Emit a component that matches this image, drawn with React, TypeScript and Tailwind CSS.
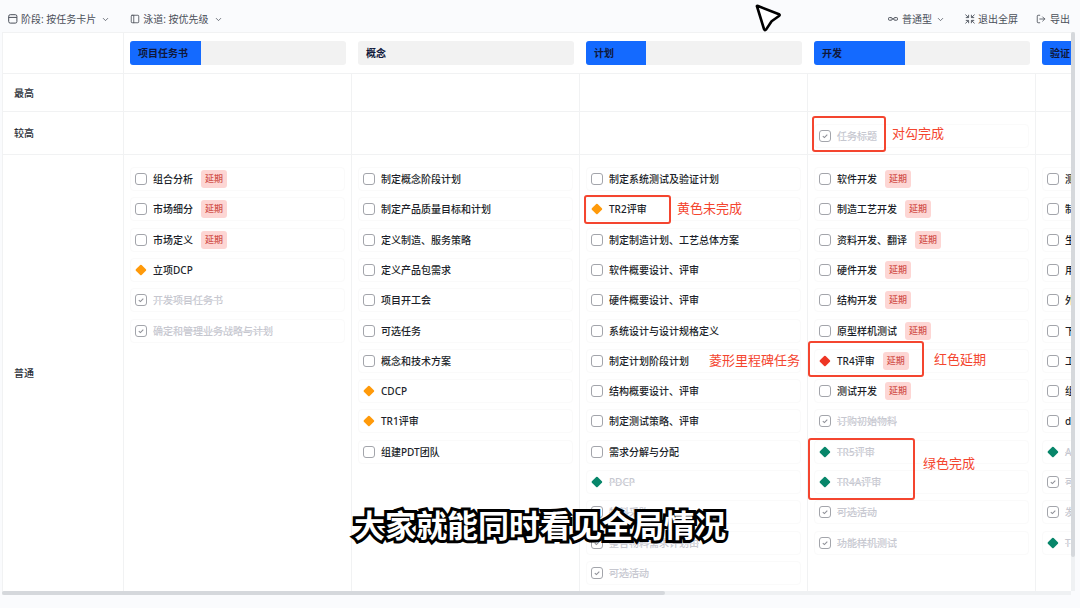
import { ChevronDown, LogOut, PanelLeft } from "lucide-react";

type Kind = "open" | "done" | "yellow" | "red" | "green";

interface Task {
  title: string;
  kind: Kind;
  late?: boolean;
}

interface Stage {
  name: string;
  progress: number;
  high?: Task[];
  normal: Task[];
}

const task = (title: string, kind: Kind = "open", late = false): Task => ({
  title,
  kind,
  late,
});

const stages: Stage[] = [
  {
    name: "项目任务书",
    progress: 33,
    normal: [
      task("组合分析", "open", true),
      task("市场细分", "open", true),
      task("市场定义", "open", true),
      task("立项DCP", "yellow"),
      task("开发项目任务书", "done"),
      task("确定和管理业务战略与计划", "done"),
    ],
  },
  {
    name: "概念",
    progress: 0,
    normal: [
      task("制定概念阶段计划"),
      task("制定产品质量目标和计划"),
      task("定义制造、服务策略"),
      task("定义产品包需求"),
      task("项目开工会"),
      task("可选任务"),
      task("概念和技术方案"),
      task("CDCP", "yellow"),
      task("TR1评审", "yellow"),
      task("组建PDT团队"),
    ],
  },
  {
    name: "计划",
    progress: 28,
    normal: [
      task("制定系统测试及验证计划"),
      task("TR2评审", "yellow"),
      task("制定制造计划、工艺总体方案"),
      task("软件概要设计、评审"),
      task("硬件概要设计、评审"),
      task("系统设计与设计规格定义"),
      task("制定计划阶段计划"),
      task("结构概要设计、评审"),
      task("制定测试策略、评审"),
      task("需求分解与分配"),
      task("PDCP", "green"),
      task("物料采购", "done"),
      task("整合物料需求计划由", "done"),
      task("可选活动", "done"),
    ],
  },
  {
    name: "开发",
    progress: 42,
    high: [task("任务标题", "done")],
    normal: [
      task("软件开发", "open", true),
      task("制造工艺开发", "open", true),
      task("资料开发、翻译", "open", true),
      task("硬件开发", "open", true),
      task("结构开发", "open", true),
      task("原型样机测试", "open", true),
      task("TR4评审", "red", true),
      task("测试开发", "open", true),
      task("订购初始物料", "done"),
      task("TR5评审", "green"),
      task("TR4A评审", "green"),
      task("可选活动", "done"),
      task("功能样机测试", "done"),
    ],
  },
  {
    name: "验证",
    progress: 50,
    normal: [
      task("测"),
      task("制"),
      task("生"),
      task("用"),
      task("外"),
      task("下"),
      task("工"),
      task("组"),
      task("d"),
      task("A", "green"),
      task("可", "done"),
      task("发", "done"),
      task("T", "green"),
    ],
  },
];

const diamondColor = {
  yellow: "fill-[#ff9a0a]",
  red: "fill-[#ee3524]",
  green: "fill-[#07866a]",
};

function Marker({ task }: { task: Task }) {
  if (task.kind === "open" || task.kind === "done") {
    return (
      <span className="relative flex size-3 shrink-0">
        <input
          type="checkbox"
          defaultChecked={task.kind === "done"}
          aria-label={task.title}
          className="peer size-3 appearance-none rounded-[3px] border border-[#a3a5ab] bg-white"
        />
        <svg
          viewBox="0 0 12 12"
          className="pointer-events-none absolute inset-0 hidden size-3 fill-none stroke-[#8f9198] peer-checked:block"
        >
          <path d="M3.8 6.1 5.4 7.6 8.3 4.6" strokeWidth="1.1" />
        </svg>
      </span>
    );
  }
  return (
    <svg viewBox="0 0 12 12" className={`size-3 shrink-0 ${diamondColor[task.kind]}`}>
      <path d="M5.2 1 .9 5.3a1 1 0 0 0 0 1.4L5.2 11a1 1 0 0 0 1.4 0l4.3-4.3a1 1 0 0 0 0-1.4L6.6 1a1 1 0 0 0-1.4 0Z" />
    </svg>
  );
}

function TaskCard({ task }: { task: Task }) {
  const finished = task.kind === "done" || task.kind === "green";
  return (
    <li className="flex h-6 items-center rounded border border-[#fafafa] px-1">
      <Marker task={task} />
      <span
        className={`ml-[6px] font-medium whitespace-nowrap ${
          finished ? "text-[#c6c7cf] line-through decoration-[#dcdde3]" : "text-[#1c1f2a]"
        }`}
      >
        {task.title}
      </span>
      {task.late && (
        <span className="ml-2 flex h-[18px] w-[26px] shrink-0 items-center justify-center rounded-[3px] bg-[#fdd6d4] text-[9px] font-medium text-[#d2524c]">
          延期
        </span>
      )}
    </li>
  );
}

function StageHeader({ stage }: { stage: Stage }) {
  return (
    <div className="flex w-[228px] shrink-0 items-center px-[6px]">
      <div className="relative flex h-6 w-full items-center overflow-hidden rounded-[3px] bg-[#f2f2f2] px-2">
        <div
          className="absolute inset-y-0 left-0 bg-[#146aff]"
          style={{ width: `${stage.progress}%` }}
        />
        <span className="relative font-bold text-[#10183a]">{stage.name}</span>
      </div>
    </div>
  );
}

function LaneLabel({ children }: { children?: string }) {
  return (
    <div className="flex w-[121px] shrink-0 items-center border-r border-[#f1f2f3] pl-[11px] font-medium text-[#2b2f38]">
      {children}
    </div>
  );
}

function Toolbar() {
  return (
    <header className="flex h-8 shrink-0 items-center justify-between pt-[6px] pr-[10px] pl-2 text-[#4a4f59]">
      <div className="flex items-center gap-5">
        <button className="flex items-center gap-[3px]">
          <svg viewBox="0 0 10 10" className="size-[10px] fill-none stroke-current">
            <rect x=".7" y=".7" width="8.2" height="8.4" rx="1.6" />
            <path d="M.7 3.4h8.2" />
          </svg>
          阶段: 按任务卡片
          <ChevronDown className="ml-[2px] size-[9px]" />
        </button>
        <button className="flex items-center gap-[3px]">
          <PanelLeft className="size-[10px]" />
          泳道: 按优先级
          <ChevronDown className="ml-[2px] size-[9px]" />
        </button>
      </div>
      <div className="flex items-center gap-5">
        <button className="flex items-center gap-1">
          <svg viewBox="0 0 10 10" className="size-[10px] fill-none stroke-current">
            <rect x=".5" y="3.6" width="3.6" height="2.6" rx=".8" />
            <rect x="5.9" y="3.6" width="3.6" height="2.6" rx=".8" />
            <path d="M4 4.9h2" />
          </svg>
          普通型
          <ChevronDown className="size-[9px]" />
        </button>
        <button className="flex items-center gap-[3px]">
          <svg viewBox="0 0 10 10" className="size-[10px] fill-none stroke-current">
            <path
              d="M.4.6l2.9 2.7M9.6.6 6.7 3.3M.4 9.4l2.9-2.7M9.6 9.4 6.7 6.7M.8 3.6h2.8V.8M9.2 3.6H6.4V.8M.8 6.4h2.8v2.8M9.2 6.4H6.4v2.8"
              strokeWidth=".9"
            />
          </svg>
          退出全屏
        </button>
        <button className="-ml-[2px] flex items-center gap-1">
          <LogOut className="size-[10px]" />
          导出
        </button>
      </div>
    </header>
  );
}

function Annotations() {
  return (
    <div className="pointer-events-none absolute inset-0 text-[13px] leading-5 text-[#f4452f]">
      <div className="absolute top-[116px] left-[812px] h-9 w-[74px] rounded-[3px] border-2 border-current" />
      <p className="absolute top-[123px] left-[892px]">对勾完成</p>
      <div className="absolute top-[195px] left-[584px] h-[29px] w-[87px] rounded-[3px] border-2 border-current" />
      <p className="absolute top-[198px] left-[677px]">黄色未完成</p>
      <div className="absolute top-[341px] left-[808px] h-9 w-[116px] rounded-[3px] border-2 border-current" />
      <p className="absolute top-[350px] left-[709px]">菱形里程碑任务</p>
      <p className="absolute top-[349px] left-[934px]">红色延期</p>
      <div className="absolute top-[438px] left-[808px] h-[62px] w-[107px] rounded-[3px] border-2 border-current" />
      <p className="absolute top-[453px] left-[923px]">绿色完成</p>
      <svg
        viewBox="0 0 28 30"
        className="absolute top-1 left-[754px] h-[30px] w-7 fill-white stroke-black"
      >
        <path
          d="M3.2 3Q2.2 1.4 4 2L25 10.2Q26.4 11 25 12L17.6 17.2 12.2 25.4Q10.8 27 10 25Z"
          strokeWidth="2.6"
          strokeLinejoin="round"
        />
      </svg>
      <p className="absolute inset-x-0 bottom-[61px] text-center text-[31px] leading-[44px] font-bold text-white [-webkit-text-stroke:6px_#000] [paint-order:stroke_fill]">
        大家就能同时看见全局情况
      </p>
    </div>
  );
}

export default function App() {
  return (
    <div className="relative flex min-h-screen flex-col overflow-hidden bg-[#fafbfd] font-['Noto_Sans','Noto_Sans_CJK_SC',sans-serif] text-[10px] leading-4">
      <Toolbar />
      <main className="mb-[13px] ml-[2px] flex flex-1 flex-col">
        <div className="flex flex-1">
          <div className="flex w-0 flex-1 flex-col overflow-hidden border-t border-l border-[#f1f2f3] bg-white">
            <div className="flex h-[41px] border-b border-[#f1f2f3]">
              <LaneLabel />
              {stages.map((s) => (
                <StageHeader key={s.name} stage={s} />
              ))}
            </div>
            <div className="flex h-[38px] border-b border-[#f1f2f3]">
              <LaneLabel>最高</LaneLabel>
              {stages.map((s) => (
                <div key={s.name} className="w-[228px] shrink-0 border-r border-[#f1f2f3]" />
              ))}
            </div>
            <div className="flex h-[43px] border-b border-[#f1f2f3]">
              <LaneLabel>较高</LaneLabel>
              {stages.map((s) => (
                <ul
                  key={s.name}
                  className="w-[228px] shrink-0 border-r border-[#f1f2f3] px-[6px] pt-3"
                >
                  {s.high?.map((t) => <TaskCard key={t.title} task={t} />)}
                </ul>
              ))}
            </div>
            <div className="flex flex-1">
              <LaneLabel>普通</LaneLabel>
              {stages.map((s) => (
                <ul
                  key={s.name}
                  className="grid w-[228px] shrink-0 grid-rows-[repeat(14,minmax(0,1fr))] items-center border-r border-[#f1f2f3] px-[6px] pt-[9px] pb-[3px]"
                >
                  {s.normal.map((t) => (
                    <TaskCard key={t.title} task={t} />
                  ))}
                </ul>
              ))}
            </div>
          </div>
          {/* vertical scrollbar */}
          <div className="mr-[5px] w-1 bg-[#eff1f3]">
            <div className="h-[94%] rounded-full bg-[#d5d8dc]" />
          </div>
        </div>
        {/* horizontal scrollbar */}
        <div className="mr-[9px] h-1 bg-[#eff1f3]">
          <div className="h-full w-[62%] rounded-full bg-[#d5d8dc]" />
        </div>
      </main>
      <Annotations />
    </div>
  );
}
